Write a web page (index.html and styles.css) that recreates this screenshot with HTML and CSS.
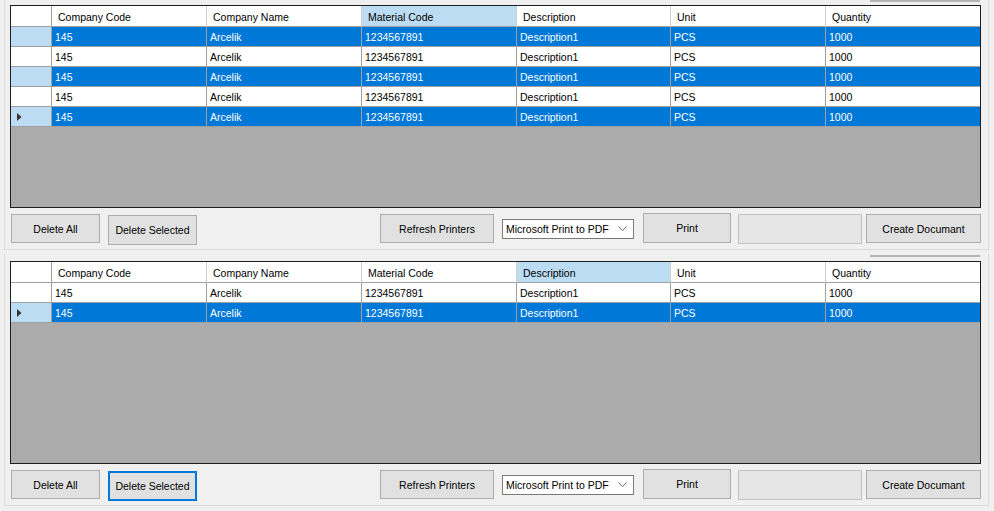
FILE: index.html
```html
<!DOCTYPE html>
<html>
<head>
<meta charset="utf-8">
<link rel="stylesheet" href="styles.css">
</head>
<body>
<div class="panel first">
  <div class="strip"></div>
  <div class="dgv">
    <div class="row head">
      <div class="c rh"></div>
      <div class="c">Company Code</div>
      <div class="c">Company Name</div>
      <div class="c hl">Material Code</div>
      <div class="c">Description</div>
      <div class="c">Unit</div>
      <div class="c last">Quantity</div>
    </div>
    <div class="row sel">
      <div class="c rh"></div>
      <div class="c">145</div><div class="c">Arcelik</div><div class="c">1234567891</div><div class="c">Description1</div><div class="c">PCS</div><div class="c last">1000</div>
    </div>
    <div class="row">
      <div class="c rh"></div>
      <div class="c">145</div><div class="c">Arcelik</div><div class="c">1234567891</div><div class="c">Description1</div><div class="c">PCS</div><div class="c last">1000</div>
    </div>
    <div class="row sel">
      <div class="c rh"></div>
      <div class="c">145</div><div class="c">Arcelik</div><div class="c">1234567891</div><div class="c">Description1</div><div class="c">PCS</div><div class="c last">1000</div>
    </div>
    <div class="row">
      <div class="c rh"></div>
      <div class="c">145</div><div class="c">Arcelik</div><div class="c">1234567891</div><div class="c">Description1</div><div class="c">PCS</div><div class="c last">1000</div>
    </div>
    <div class="row sel">
      <div class="c rh"><svg class="tri" width="5" height="8" viewBox="0 0 5 8"><path d="M0 0 L4.5 4 L0 8 Z" fill="#333"/></svg></div>
      <div class="c">145</div><div class="c">Arcelik</div><div class="c">1234567891</div><div class="c">Description1</div><div class="c">PCS</div><div class="c last">1000</div>
    </div>
    <div class="fill"></div>
  </div>
  <div class="btns">
    <div class="btn b-all">Delete All</div>
    <div class="btn b-sel">Delete Selected</div>
    <div class="btn b-ref">Refresh Printers</div>
    <div class="combo"><span>Microsoft Print to PDF</span><svg width="9" height="6" viewBox="0 0 9 6"><path d="M0.5 0.5 L4.5 4.5 L8.5 0.5" fill="none" stroke="#6d6d6d" stroke-width="1"/></svg></div>
    <div class="btn b-print">Print</div>
    <div class="btn b-blank disabled"></div>
    <div class="btn b-doc">Create Documant</div>
  </div>
</div>

<div class="panel second">
  <div class="strip"></div>
  <div class="dgv">
    <div class="row head">
      <div class="c rh"></div>
      <div class="c">Company Code</div>
      <div class="c">Company Name</div>
      <div class="c">Material Code</div>
      <div class="c hl">Description</div>
      <div class="c">Unit</div>
      <div class="c last">Quantity</div>
    </div>
    <div class="row">
      <div class="c rh"></div>
      <div class="c">145</div><div class="c">Arcelik</div><div class="c">1234567891</div><div class="c">Description1</div><div class="c">PCS</div><div class="c last">1000</div>
    </div>
    <div class="row sel">
      <div class="c rh"><svg class="tri" width="5" height="8" viewBox="0 0 5 8"><path d="M0 0 L4.5 4 L0 8 Z" fill="#333"/></svg></div>
      <div class="c">145</div><div class="c">Arcelik</div><div class="c">1234567891</div><div class="c">Description1</div><div class="c">PCS</div><div class="c last">1000</div>
    </div>
    <div class="fill"></div>
  </div>
  <div class="btns">
    <div class="btn b-all">Delete All</div>
    <div class="btn b-sel focus">Delete Selected</div>
    <div class="btn b-ref">Refresh Printers</div>
    <div class="combo"><span>Microsoft Print to PDF</span><svg width="9" height="6" viewBox="0 0 9 6"><path d="M0.5 0.5 L4.5 4.5 L8.5 0.5" fill="none" stroke="#6d6d6d" stroke-width="1"/></svg></div>
    <div class="btn b-print">Print</div>
    <div class="btn b-blank disabled"></div>
    <div class="btn b-doc">Create Documant</div>
  </div>
</div>
</body>
</html>
```
FILE: styles.css
```css
* { box-sizing: border-box; }
body {
  margin: 0;
  background: #f0f0f0;
  font-family: "Liberation Sans", Arial, sans-serif;
  font-size: 10.5px;
  color: #000;
  width: 994px;
  height: 511px;
  overflow: hidden;
}
.panel {
  margin-left: 4px;
  width: 985px;
  border-left: 1px solid #dadada;
  border-right: 1px solid #dadada;
  border-bottom: 1px solid #dadada;
  padding: 0 7px 0 5px;
  display: flex;
  flex-direction: column;
}
.panel.first { height: 250px; }
.panel.second { height: 252px; margin-top: 4px; padding-top: 1px; }
.strip {
  align-self: flex-end;
  width: 110px;
  height: 2px;
  margin-right: 1px;
  margin-bottom: 3px;
  background: #b4b4b4;
}
.panel.second .strip { margin-bottom: 4px; }
.dgv {
  height: 203px;
  border: 1px solid #1e1e1e;
  background: #ababab;
  display: flex;
  flex-direction: column;
}
.row {
  display: grid;
  grid-template-columns: 41px 155px 155px 155px 154px 155px 154px;
  height: 20px;
  background: #fff;
}
.row.head { height: 21px; }
.c {
  border-right: 1px solid #a0a0a0;
  border-bottom: 1px solid #a0a0a0;
  padding-left: 3px;
  display: flex;
  align-items: center;
  white-space: nowrap;
  overflow: hidden;
}
.c.last { border-right: none; }
.head .c { padding-left: 6px; padding-top: 1px; border-right-color: #d0d0d0; }
.head .c.rh { border-right-color: #a0a0a0; }
.head .c.hl { background: #bcdcf4; }
.row.sel { background: #0078d7; color: #fff; }
.row.sel .c.rh { background: #bcdcf4; }
.c.rh { padding-left: 6px; }
.tri { display: block; margin-top: 1px; }
.fill { flex: 1; }

.btns {
  display: flex;
  align-items: flex-start;
  margin-top: 6px;
  padding-left: 1px;
}
.btn {
  height: 29px;
  background: #e1e1e1;
  border: 1px solid #adadad;
  display: flex;
  align-items: center;
  justify-content: center;
  white-space: nowrap;
}
.btn.focus { border: 2px solid #0078d7; }
.btn.disabled { background: #e6e6e6; border-color: #c2c2c2; }
.b-all { width: 89px; }
.b-sel { width: 89px; margin-left: 8px; margin-top: 1px; height: 30px; }
.b-ref { width: 114px; margin-left: 183px; }
.combo {
  width: 132px;
  height: 20px;
  margin-left: 8px;
  margin-top: 5px;
  background: #fff;
  border: 1px solid #7a7a7a;
  display: flex;
  align-items: center;
  justify-content: space-between;
  padding: 0 6px 0 3px;
  white-space: nowrap;
}
.b-print { width: 88px; margin-left: 9px; margin-top: -1px; height: 30px; }
.b-blank { width: 124px; margin-left: 7px; height: 30px; }
.b-doc { width: 115px; margin-left: 4px; }
```
